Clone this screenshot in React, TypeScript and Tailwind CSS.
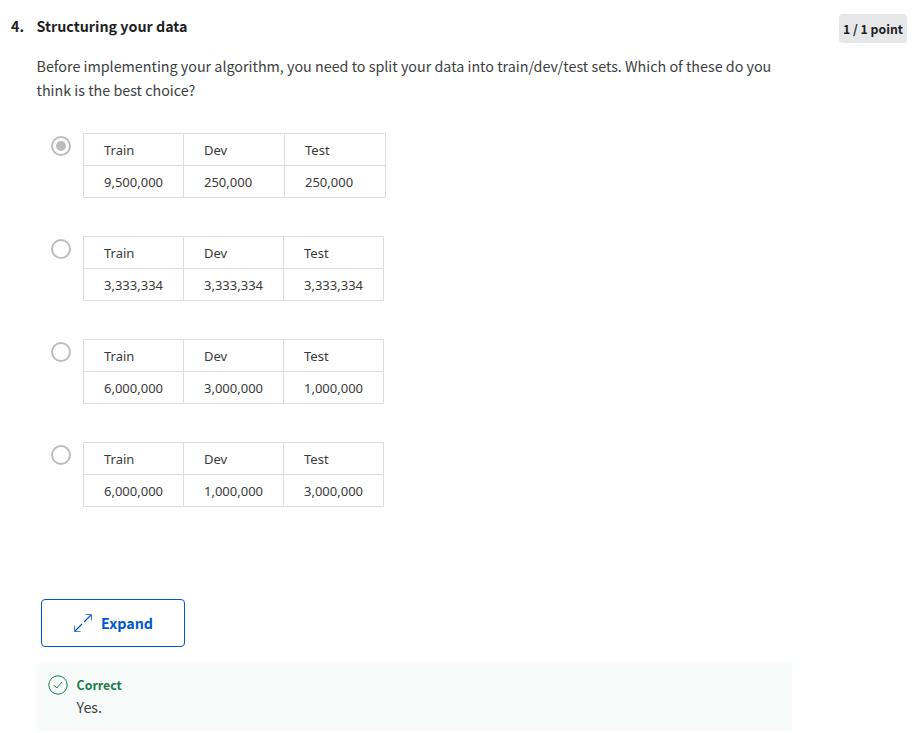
const options = [
  { values: ["9,500,000", "250,000", "250,000"], checked: true },
  { values: ["3,333,334", "3,333,334", "3,333,334"], checked: false },
  { values: ["6,000,000", "3,000,000", "1,000,000"], checked: false },
  { values: ["6,000,000", "1,000,000", "3,000,000"], checked: false },
];
const headers = ["Train", "Dev", "Test"];

function SplitTable({ values, wide }: { values: string[]; wide: boolean }) {
  const columns = wide ? "grid-cols-[100px_101px_101px]" : "grid-cols-[100px_100px_100px]";
  return (
    <div
      className={`grid ${columns} grid-rows-[32px_32px] border-l border-t border-[#dedede] font-['Noto_Sans',sans-serif] text-[13px] text-[#3a3a3a]`}
    >
      {[...headers, ...values].map((text, i) => (
        <div key={i} className="border-b border-r border-[#dedede] pl-5 leading-8 whitespace-nowrap">
          {text}
        </div>
      ))}
    </div>
  );
}

function Radio({ checked }: { checked: boolean }) {
  return (
    <span className="mt-[3px] flex size-5 shrink-0 items-center justify-center rounded-full border-2 border-[#bdbdbd]">
      {checked && <span className="size-[10px] rounded-full bg-[#bdbdbd]" />}
    </span>
  );
}

export default function App() {
  return (
    <main className="h-[733px] w-[915px] overflow-hidden bg-white font-['Noto_Sans_CJK_SC',sans-serif] text-[#1f1f1f]">
      <header className="flex h-[54px] items-start pl-[11px] pr-2 pt-[14px]">
        <span className="w-[25.5px] text-[14.3px] font-bold leading-6">4.</span>
        <h2 className="text-[14.3px] font-bold leading-6">Structuring your data</h2>
        <span className="ml-auto flex h-[29px] w-[68px] items-center justify-center rounded-[4px] bg-[#e5e7e8] pt-0.5 text-[12.3px] font-bold whitespace-nowrap">
          1 / 1 point
        </span>
      </header>
      <p className="ml-[36.5px] text-[14.32px] leading-6 whitespace-nowrap text-[#3c3e40]">
        Before implementing your algorithm, you need to split your data into train/dev/test sets. Which of these do you
        <br />
        think is the best choice?
      </p>
      <div className="ml-[51px] mt-[31px] flex flex-col gap-[38px]">
        {options.map((option, i) => (
          <div key={i} className="flex items-start gap-3">
            <Radio checked={option.checked} />
            <SplitTable values={option.values} wide={option.checked} />
          </div>
        ))}
      </div>
      <button className="ml-[41px] mt-[92px] flex h-12 w-36 items-center rounded-[4px] border border-[#0056d2] pl-[31px] text-[#0056d2]">
        <svg className="size-5" viewBox="0 0 20 20" fill="none" stroke="currentColor" strokeWidth="1">
          <path d="M2 18 9 11M11 9 18 2" strokeWidth="1.2" />
          <path d="M12.5 1.5H18.5V7.5M1.5 12.5V18.5H7.5" strokeOpacity=".75" />
        </svg>
        <span className="ml-2 text-[14.3px] font-bold">Expand</span>
      </button>
      <section className="ml-[36px] mt-4 flex h-[68px] w-[756px] bg-[#f7fbf9] pl-3 pt-3">
        <svg className="size-5 shrink-0" viewBox="0 0 20 20" fill="none" stroke="#1d7c4d">
          <circle cx="10" cy="10" r="9.2" />
          <path d="m6 10.2 2.8 2.8 5.2-6" />
        </svg>
        <div className="ml-2">
          <h3 className="ml-[0.5px] text-[12.4px] font-bold leading-[20px] text-[#1d7c4d]">Correct</h3>
          <p className="ml-[0.5px] text-[14.32px] leading-6 text-[#3c3e40]">Yes.</p>
        </div>
      </section>
    </main>
  );
}
